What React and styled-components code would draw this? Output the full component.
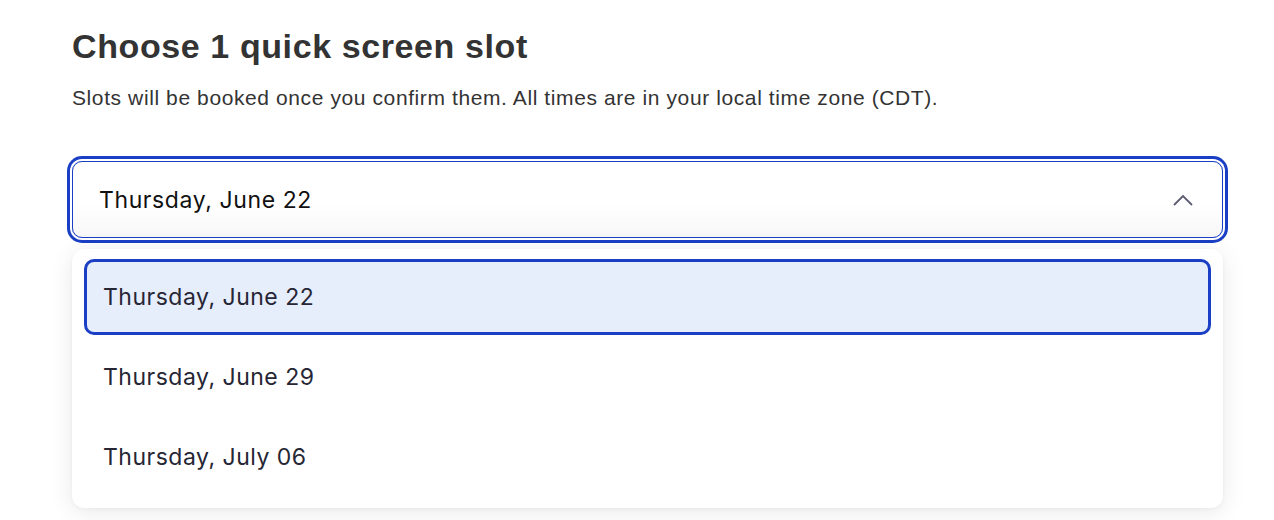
import React, { useState } from "react";
import styled, { createGlobalStyle } from "styled-components";

const GlobalStyle = createGlobalStyle`
  body {
    margin: 0;
    background: #ffffff;
    font-family: "Liberation Sans", Arial, sans-serif;
  }
`;

const Page = styled.div`
  padding: 26px 51px 0 72px;
  height: 520px;
  box-sizing: border-box;
  overflow: hidden;
`;

const Title = styled.h1`
  margin: 0;
  font-size: 34px;
  font-weight: 700;
  letter-spacing: 0.6px;
  line-height: 40px;
  color: #333333;
`;

const Subtitle = styled.p`
  margin: 19px 0 0;
  font-size: 21px;
  letter-spacing: 0.6px;
  line-height: 26px;
  color: #333333;
`;

const SelectWrap = styled.div`
  margin-top: 50px;
  display: flex;
  flex-direction: column;
  gap: 11px;
`;

const Trigger = styled.button`
  display: flex;
  align-items: center;
  justify-content: space-between;
  width: 100%;
  height: 77px;
  padding: 0 26px;
  box-sizing: border-box;
  border: 1px solid #1a3fc4;
  border-radius: 10px;
  background: linear-gradient(#ffffff 55%, #f7f7f8);
  box-shadow: 0 0 0 2px #ffffff, 0 0 0 5px #1a3fc4;
  font-family: Inter, "Liberation Sans", sans-serif;
  font-size: 23px;
  letter-spacing: 0.6px;
  color: #111111;
  cursor: pointer;
`;

const Chevron = styled.svg`
  width: 22px;
  height: 12px;
  margin-right: 2px;
`;

const Menu = styled.ul`
  list-style: none;
  margin: 0;
  padding: 10px 12px 13px;
  background: #ffffff;
  border-radius: 12px;
  box-shadow: 0 4px 24px rgba(0, 0, 0, 0.09), 0 1px 4px rgba(0, 0, 0, 0.04);
  display: flex;
  flex-direction: column;
  gap: 4px;
`;

const Option = styled.li`
  display: flex;
  align-items: center;
  height: 76px;
  padding: 0 16px;
  box-sizing: border-box;
  border-radius: 10px;
  border: 3px solid ${(p) => (p.$active ? "#1a3fc4" : "transparent")};
  background: ${(p) => (p.$active ? "#e6edfb" : "transparent")};
  font-family: Inter, "Liberation Sans", sans-serif;
  font-size: 23px;
  letter-spacing: 0.5px;
  color: #262634;
  cursor: pointer;
`;

const dates = ["Thursday, June 22", "Thursday, June 29", "Thursday, July 06"];

export default function App() {
  const [selected, setSelected] = useState(dates[0]);
  return (
    <Page>
      <GlobalStyle />
      <Title>Choose 1 quick screen slot</Title>
      <Subtitle>
        Slots will be booked once you confirm them. All times are in your local
        time zone (CDT).
      </Subtitle>
      <SelectWrap>
        <Trigger>
          {selected}
          <Chevron viewBox="0 0 22 12">
            <path
              d="M2 11 L11 2 L20 11"
              fill="none"
              stroke="#5b5b72"
              strokeWidth="1.8"
            />
          </Chevron>
        </Trigger>
        <Menu>
          {dates.map((d) => (
            <Option key={d} $active={d === selected} onClick={() => setSelected(d)}>
              {d}
            </Option>
          ))}
        </Menu>
      </SelectWrap>
    </Page>
  );
}
